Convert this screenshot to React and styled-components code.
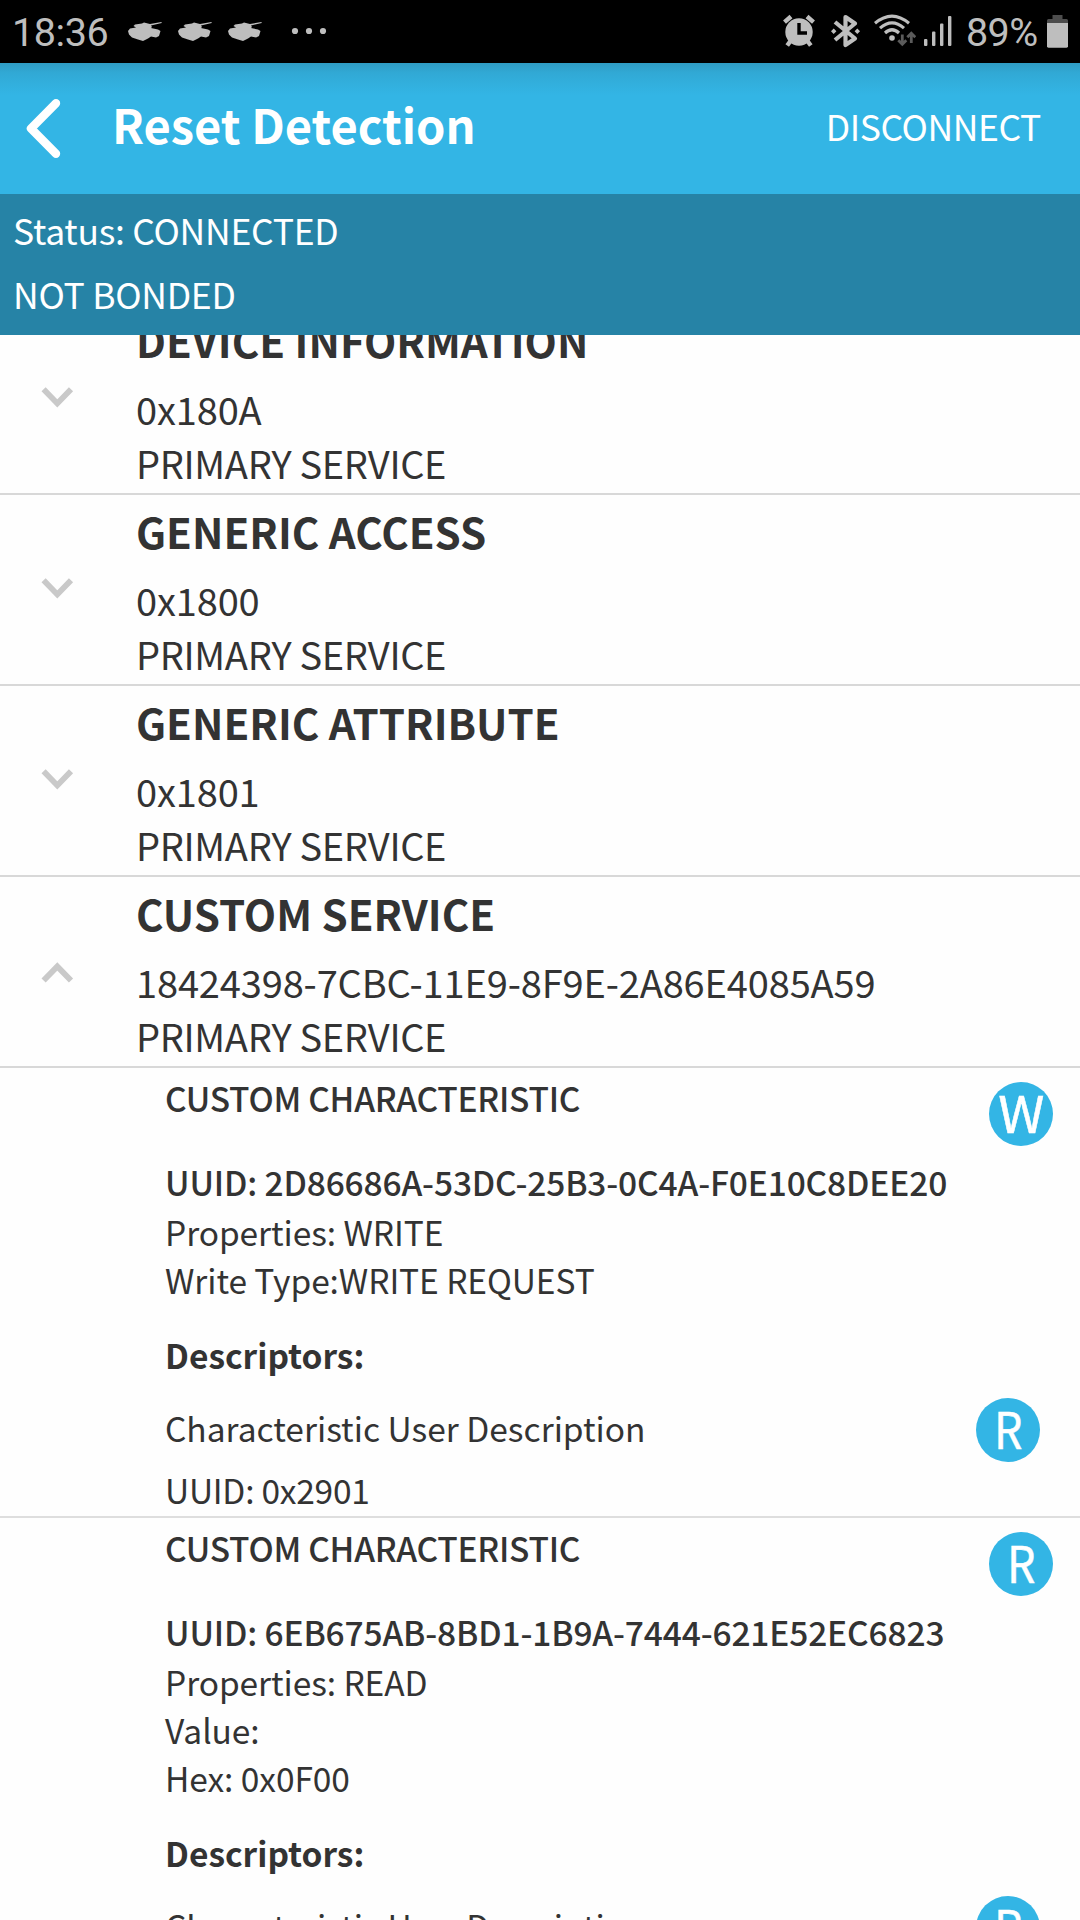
import React from "react";
import styled, { createGlobalStyle } from "styled-components";

const GlobalStyle = createGlobalStyle`
  body {
    margin: 0;
    background: #fefefe;
    color: #333;
    font-family: "Noto Sans CJK SC", "Noto Sans", sans-serif;
  }
`;

const Screen = styled.div`
  display: flex;
  flex-direction: column;
  width: 1080px;
  height: 1920px;
  overflow: hidden;
`;

const SystemBar = styled.div`
  display: flex;
  flex: none;
  justify-content: space-between;
  height: 63px;
  box-sizing: border-box;
  padding: 0 12px 0 12px;
  background: #000;
  color: #bebebe;
`;

const SystemGroup = styled.div`
  display: flex;
  align-items: flex-start;
`;

const SystemText = styled.span`
  font-family: Roboto, sans-serif;
  font-size: ${(p) => p.$size}px;
  line-height: 66px;
  letter-spacing: ${(p) => p.$track || 0}px;
  width: ${(p) => p.$width}px;
  white-space: nowrap;
`;

const SystemIcon = styled.svg`
  display: block;
  flex: none;
  width: ${(p) => p.$width}px;
  height: 63px;
  margin-right: ${(p) => p.$gap || 0}px;
`;

const AppBar = styled.header`
  display: flex;
  flex: none;
  align-items: center;
  height: 131px;
  box-sizing: border-box;
  padding: 0 39px 0 24px;
  color: #fff;
  background: linear-gradient(#2f9cc4 0, #31a9d5 10px, #33b5e5 32px);
`;

const BackIcon = styled.svg`
  width: 40px;
  height: 64px;
  margin-right: 48px;
`;

const Title = styled.h1`
  flex: 1;
  margin: 0;
  font-size: 47px;
  font-weight: 700;
  line-height: 60px;
  padding-bottom: 10px;
`;

const Disconnect = styled.button`
  border: 0;
  padding: 0;
  background: none;
  color: inherit;
  font: inherit;
  font-size: 35.5px;
  letter-spacing: -0.4px;
  line-height: 54px;
  padding-bottom: 6px;
`;

const StatusPanel = styled.section`
  flex: none;
  height: 141px;
  box-sizing: border-box;
  padding-top: 4px;
  padding-left: 13px;
  background: #2683a6;
  color: #fff;
`;

const StatusLine = styled.div`
  font-size: 35.5px;
  letter-spacing: -0.28px;
  line-height: 64px;
`;

const ServiceList = styled.main`
  flex: 1;
  min-height: 0;
  overflow: hidden;
`;

const Scrolled = styled.div`
  margin-top: -31px;
`;

const ServiceRow = styled.section`
  display: flex;
  height: 191px;
  box-sizing: border-box;
  border-bottom: 2px solid #d8d8d8;
`;

const Chevron = styled.svg`
  flex: none;
  width: 34px;
  height: 22px;
  margin: ${(p) => (p.$open ? 85 : 82)}px 62px 0 40px;
`;

const ServiceText = styled.div`
  padding-top: 11px;
`;

const ServiceName = styled.h2`
  margin: 0 0 17px;
  font-size: 42px;
  font-weight: 700;
  line-height: 50px;
`;

const ServiceLine = styled.div`
  font-size: 38px;
  line-height: 54px;
  letter-spacing: ${(p) => p.$track}px;
`;

const CharacteristicCard = styled.section`
  padding: 0 0 2px 165px;
  border-bottom: 2px solid #dedede;
`;

const Split = styled.div`
  display: flex;
  justify-content: space-between;
  align-items: flex-start;
  padding-right: ${(p) => p.$right}px;
`;

const Column = styled.div`
  padding-top: 6px;
`;

const Line = styled.div`
  font-size: 33.5px;
  font-weight: ${(p) => p.$weight || 400};
  letter-spacing: ${(p) => p.$track || 0}px;
  line-height: 48px;
  margin-top: ${(p) => p.$gap || 0}px;
  white-space: nowrap;
`;

const Badge = styled.span`
  flex: none;
  width: 64px;
  height: 64px;
  margin-top: ${(p) => p.$top || 0}px;
  border-radius: 50%;
  background: #33b5e5;
  color: #fff;
  font-size: 51px;
  line-height: 58px;
  text-align: center;
`;

const BadgeLetter = styled.span`
  display: inline-block;
  transform: scaleX(${(p) => (p.$narrow ? 0.88 : 1.03)});
  -webkit-text-stroke: 0.5px #fff;
`;

function ActionBadge({ top, letter }) {
  return (
    <Badge $top={top}>
      <BadgeLetter $narrow={letter === "R"}>{letter}</BadgeLetter>
    </Badge>
  );
}

function Tank() {
  return (
    <SystemIcon $width={34} $gap={16} viewBox="0 0 34 63" fill="#bebebe">
      <path d="M0 31 L2 28.5 L8 27.5 L5.5 26 L7 24.5 L14 23.5 L16 22.5 L22 24 L33.5 22 L33.7 23 L23 25.5 L24 27 L23 28 L30 29.5 L32.5 31 L31 36 L28 37.5 L23 36.5 L20 38.5 L15 41 L10 39.5 L4 37.5 L1 34.5Z" />
    </SystemIcon>
  );
}

function Alarm() {
  return (
    <SystemIcon $width={32} $gap={16} viewBox="0 0 32 63">
      <g stroke="#bebebe" strokeWidth="4.4">
        <path d="M1.5 22.2 L8 16.5 M30.5 22.2 L24 16.5" />
        <path d="M4.2 45.5 L9 39 M27.8 45.5 L23 39" />
      </g>
      <circle cx="16" cy="32" r="13.7" fill="#bebebe" />
      <path d="M16 23v10h8" fill="none" stroke="#000" strokeWidth="3.4" />
    </SystemIcon>
  );
}

function BluetoothSignal() {
  return (
    <SystemIcon $width={29} $gap={14.5} viewBox="0 0 29 63">
      <path
        d="M4 22 L24 38.5 L14.5 45 V17 L24 23.5 L4 40"
        fill="none"
        stroke="#bebebe"
        strokeWidth="4.2"
        strokeLinejoin="round"
      />
      <path d="M0 31.2 L2.7 28.5 L5.4 31.2 L2.7 34Z M23.6 31.2 L26.3 28.5 L29 31.2 L26.3 34Z" fill="#bebebe" />
    </SystemIcon>
  );
}

function WifiSignal() {
  return (
    <SystemIcon $width={42} $gap={8} viewBox="0 0 42 63">
      <g fill="none" stroke="#bebebe" strokeWidth="3.1">
        <path d="M1 23.3 Q18 9 35 23.3" />
        <path d="M6 28.2 Q18 17.5 30 28.2" />
        <path d="M11 33 Q18 26.5 25 33" />
      </g>
      <circle cx="18" cy="38" r="2.8" fill="#bebebe" />
      <g fill="none" stroke="#5b5b5b" strokeWidth="2.8">
        <path d="M28.3 34.5 V44 M24.3 40.3 L28.3 44.2 L32.3 40.3" />
        <path d="M37.3 43 V33.5 M33.3 37.2 L37.3 33.3 L41.3 37.2" />
      </g>
    </SystemIcon>
  );
}

function CellSignal() {
  return (
    <SystemIcon $width={28} $gap={14} viewBox="0 0 28 63" fill="#bebebe">
      <rect x="0" y="39" width="3.4" height="7" rx="1" />
      <rect x="8" y="31.5" width="3.4" height="14.5" rx="1" />
      <rect x="16" y="23.5" width="3.4" height="22.5" rx="1" />
      <rect x="24" y="16" width="3.4" height="30" rx="1" />
    </SystemIcon>
  );
}

function Battery() {
  return (
    <SystemIcon $width={21} viewBox="0 0 21 63">
      <path d="M0 23V20.5Q0 19 1.5 19H5.5V15H15.5V19H19.5Q21 19 21 20.5V23Z" fill="#4d4d4d" />
      <path d="M0 23H21V46.3Q21 47.7 19.5 47.7H1.5Q0 47.7 0 46.3Z" fill="#bebebe" />
    </SystemIcon>
  );
}

function Service({ name, uuid, open }) {
  return (
    <ServiceRow>
      <Chevron $open={open} viewBox="0 0 34 22">
        <path
          d={open ? "M3.6 18.6 L17.3 4.4 L31 18.6" : "M3.6 3.2 L17.3 17.4 L31 3.2"}
          fill="none"
          stroke="#c9c9c9"
          strokeWidth="5.8"
        />
      </Chevron>
      <ServiceText>
        <ServiceName>{name}</ServiceName>
        <ServiceLine $track={-0.14}>{uuid}</ServiceLine>
        <ServiceLine $track={-0.33}>PRIMARY SERVICE</ServiceLine>
      </ServiceText>
    </ServiceRow>
  );
}

function Characteristic({ uuid, action, details }) {
  return (
    <CharacteristicCard>
      <Split $right={27}>
        <Column>
          <Line $weight={500} $track={-0.26}>CUSTOM CHARACTERISTIC</Line>
          <Line $weight={500} $track={-0.15} $gap={36}>UUID: {uuid}</Line>
        </Column>
        <ActionBadge top={14} letter={action} />
      </Split>
      {details.map((text, i) => (
        <Line key={text} $gap={i === 0 ? 2 : 0} $track={-0.08}>{text}</Line>
      ))}
      <Line $weight={700} $gap={27}>Descriptors:</Line>
      <Split $right={40}>
        <Column>
          <Line $gap={19}>Characteristic User Description</Line>
          <Line $gap={14} $track={-0.25}>UUID: 0x2901</Line>
        </Column>
        <ActionBadge top={19} letter="R" />
      </Split>
    </CharacteristicCard>
  );
}

export default function App() {
  return (
    <Screen>
      <GlobalStyle />
      <SystemBar>
        <SystemGroup>
          <SystemText $size={39.5} $track={-0.4} $width={116}>18:36</SystemText>
          <Tank />
          <Tank />
          <Tank />
          <SystemIcon $width={60} viewBox="0 0 60 63" fill="#bebebe">
            <circle cx="17" cy="31" r="3.1" />
            <circle cx="31" cy="31" r="3.1" />
            <circle cx="45" cy="31" r="3.1" />
          </SystemIcon>
        </SystemGroup>
        <SystemGroup>
          <Alarm />
          <BluetoothSignal />
          <WifiSignal />
          <CellSignal />
          <SystemText $size={39.5} $track={-0.6} $width={81}>89%</SystemText>
          <Battery />
        </SystemGroup>
      </SystemBar>
      <AppBar>
        <BackIcon viewBox="0 0 40 64">
          <path d="M32 6.3 L7 31.5 L32 56.7" fill="none" stroke="#fff" strokeWidth="8.4" strokeLinejoin="round" strokeLinecap="round" />
        </BackIcon>
        <Title>Reset Detection</Title>
        <Disconnect>DISCONNECT</Disconnect>
      </AppBar>
      <StatusPanel>
        <StatusLine>Status: CONNECTED</StatusLine>
        <StatusLine>NOT BONDED</StatusLine>
      </StatusPanel>
      <ServiceList>
        <Scrolled>
          <Service name="DEVICE INFORMATION" uuid="0x180A" />
          <Service name="GENERIC ACCESS" uuid="0x1800" />
          <Service name="GENERIC ATTRIBUTE" uuid="0x1801" />
          <Service name="CUSTOM SERVICE" uuid="18424398-7CBC-11E9-8F9E-2A86E4085A59" open />
          <Characteristic
            uuid="2D86686A-53DC-25B3-0C4A-F0E10C8DEE20"
            action="W"
            details={["Properties: WRITE", "Write Type:WRITE REQUEST"]}
          />
          <Characteristic
            uuid="6EB675AB-8BD1-1B9A-7444-621E52EC6823"
            action="R"
            details={["Properties: READ", "Value:", "Hex: 0x0F00"]}
          />
        </Scrolled>
      </ServiceList>
    </Screen>
  );
}
